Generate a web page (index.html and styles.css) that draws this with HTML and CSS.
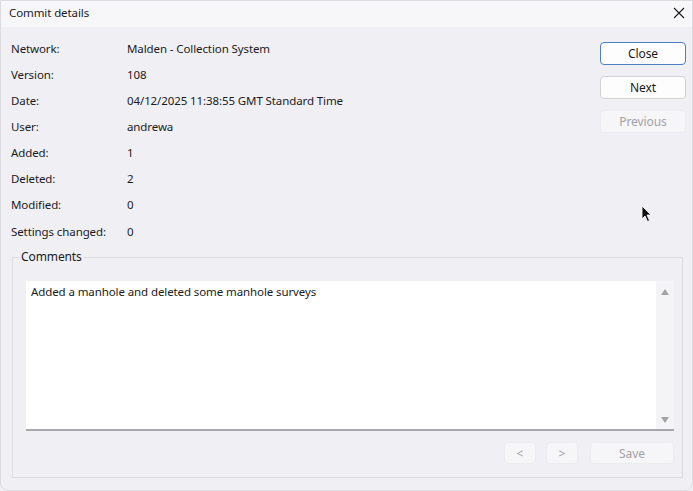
FILE: index.html
```html
<!DOCTYPE html>
<html lang="en">

<head>
  <meta charset="UTF-8" />
  <meta name="viewport" content="width=device-width, initial-scale=1.0" />
  <title>Commit details</title>
  <link rel="stylesheet" href="styles.css">
</head>

<body>
  <div class="dialog">
    <!-- title bar -->
    <div class="titlebar">
      <span class="title">Commit details</span>
      <span class="close-x">
        <svg width="12" height="12" viewBox="0 0 12 12">
          <path d="M1 1 L11 11 M11 1 L1 11" stroke="#1a1a1a" stroke-width="1.1" fill="none" />
        </svg>
      </span>
    </div>

    <div class="main">
      <!-- commit info -->
      <div class="fields">
        <span class="label">Network:</span><span>Malden - Collection System</span>
        <span class="label">Version:</span><span>108</span>
        <span class="label">Date:</span><span>04/12/2025 11:38:55 GMT Standard Time</span>
        <span class="label">User:</span><span>andrewa</span>
        <span class="label">Added:</span><span>1</span>
        <span class="label">Deleted:</span><span>2</span>
        <span class="label">Modified:</span><span>0</span>
        <span class="label">Settings changed:</span><span>0</span>
      </div>
      <div class="actions">
        <button class="btn default">Close</button>
        <button class="btn">Next</button>
        <button class="btn" disabled>Previous</button>
      </div>
    </div>

    <!-- comments -->
    <fieldset class="group">
      <legend>Comments</legend>
      <div class="memo">
        <div class="memo-text">Added a manhole and deleted some manhole surveys</div>
        <div class="scroll">
          <svg width="10" height="8" viewBox="0 0 10 8"><path d="M1 7 L5 1 L9 7 Z" fill="#a3a3a6" /></svg>
          <svg width="10" height="8" viewBox="0 0 10 8"><path d="M1 1 L9 1 L5 7 Z" fill="#a3a3a6" /></svg>
        </div>
      </div>
      <div class="memo-bar">
        <button class="btn small" disabled>&lt;</button>
        <button class="btn small" disabled>&gt;</button>
        <button class="btn save" disabled>Save</button>
      </div>
    </fieldset>

    <!-- mouse pointer -->
    <svg class="pointer" width="12" height="18" viewBox="0 0 12 18">
      <path d="M1 1 L1 14 L4 11 L6.5 16.5 L8.5 15.5 L6 10 L10 10 Z" fill="#111" stroke="#fff" stroke-width="0.8" />
    </svg>
  </div>
</body>

</html>
```

FILE: styles.css
```css
* {
  margin: 0;
  padding: 0;
  box-sizing: border-box;
}

body {
  font: 11.5px "Noto Sans", "Liberation Sans", sans-serif;
  letter-spacing: -0.1px;
  color: #1b1b1b;
  background: #f0eff4;
}

.dialog {
  position: relative;
  width: 693px;
  height: 491px;
  background: #f0eff4;
  border: 1px solid #dcdbe0;
  border-radius: 0 0 8px 8px;
}

.titlebar {
  height: 26px;
  display: flex;
  align-items: center;
  justify-content: space-between;
  padding: 0 7px 3px 8px;
  background: #f7f7f9;
}

.close-x {
  display: flex;
}

.main {
  display: flex;
  justify-content: space-between;
  padding: 8px 6px 0 10px;
}

.fields {
  display: grid;
  grid-template-columns: 116px auto;
  grid-auto-rows: 26.15px;
  align-items: center;
}

.actions {
  display: flex;
  flex-direction: column;
  gap: 11px;
  padding-top: 7px;
}

.btn {
  width: 86px;
  height: 23px;
  font: 12px "Noto Sans", "Liberation Sans", sans-serif;
  letter-spacing: -0.1px;
  color: #1b1b1b;
  background: #fdfdfd;
  border: 1px solid #d3d3d6;
  border-radius: 4px;
}

.btn.default {
  border-color: #4f7fc0;
}

.btn:disabled {
  color: #a2a2a6;
  background: #f6f6f8;
  border-color: #ececef;
}

.group {
  margin: 5px 9px 0 11px;
  height: 229px;
  border: 1px solid #dcdbe0;
  padding: 16px 8px 13px 13px;
}

.group legend {
  margin-left: -7px;
  padding: 0 2px;
  line-height: 16px;
  font-size: 12px;
}

.memo {
  display: flex;
  height: 150px;
  background: #fff;
  border-bottom: 2px solid #a8a8ab;
}

.memo-text {
  flex: 1;
  padding: 3px 5px;
}

.scroll {
  width: 18px;
  display: flex;
  flex-direction: column;
  justify-content: space-between;
  align-items: center;
  padding: 7px 0 5px;
  background: #f4f4f6;
}

.memo-bar {
  display: flex;
  justify-content: flex-end;
  gap: 10px;
  margin-top: 11px;
}

.btn.small {
  width: 32px;
  height: 22px;
}

.btn.save {
  width: 84px;
  height: 22px;
  margin-left: 2px;
}

.pointer {
  position: absolute;
  left: 640px;
  top: 204px;
}
```
